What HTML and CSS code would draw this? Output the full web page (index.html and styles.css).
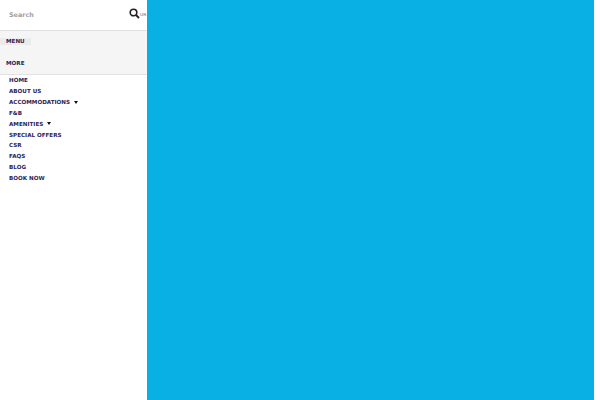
FILE: index.html
```html
<!DOCTYPE html>
<html lang="en">
<head>
<meta charset="utf-8">
<title>Menu</title>
<link rel="stylesheet" href="styles.css">
</head>
<body>
<div class="page">
  <aside class="sidebar">
    <div class="search">
      <span class="search-label">Search</span>
      <svg class="search-icon" width="11" height="11" viewBox="0 0 11 11" aria-hidden="true"><circle cx="4.5" cy="4.5" r="3.3" fill="none" stroke="#222" stroke-width="1.6"/><path d="M7 7l3 3" stroke="#222" stroke-width="1.8"/></svg>
      <span class="search-clip">UR</span>
    </div>
    <div class="tabs">
      <div class="tab-row"><span class="tab tab-active">MENU</span></div>
      <div class="tab-row"><span class="tab">MORE</span></div>
    </div>
    <ul class="nav">
      <li>HOME</li>
      <li>ABOUT US</li>
      <li>ACCOMMODATIONS<span class="caret"></span></li>
      <li>F&amp;B</li>
      <li>AMENITIES<span class="caret"></span></li>
      <li>SPECIAL OFFERS</li>
      <li>CSR</li>
      <li>FAQS</li>
      <li>BLOG</li>
      <li>BOOK NOW</li>
    </ul>
  </aside>
  <main class="hero"></main>
</div>
</body>
</html>
```
FILE: styles.css
```css
* { box-sizing: border-box; }
html, body { margin: 0; height: 100%; background: #fff; overflow: hidden; }
body { font-family: "DejaVu Sans", sans-serif; text-rendering: geometricPrecision; }
.page { display: flex; width: 594px; height: 400px; }
.sidebar { width: 147px; flex: none; background: #fff; }
.hero { flex: 1; background: #08b0e4; }
.search { display: flex; align-items: center; height: 31px; padding-left: 9px; border-bottom: 1px solid #e2e2e2; }
.search-label { flex: 1; font-size: 6.4px; font-weight: 700; color: #a0a0a0; }
.search-icon { flex: none; margin-top: -3px; }
.search-clip { flex: none; width: 7px; overflow: hidden; font-size: 4.5px; color: #666; white-space: nowrap; }
.tabs { display: flex; flex-direction: column; height: 44px; background: #f5f5f5; border-bottom: 1px solid #e2e2e2; padding-top: 7px; }
.tab-row { display: flex; flex: none; height: 21.5px; }
.tab { height: 7px; padding: 0 6px; font-size: 5.6px; line-height: 9px; font-weight: 700; color: #2a2558; }
.tab-active { width: 31px; background: #ebebeb; }
.nav { list-style: none; margin: 0; padding: 1px 0 0 9px; }
.nav li { display: flex; align-items: center; height: 10.85px; font-size: 5.6px; font-weight: 700; color: #2a2558; }
.caret { width: 0; height: 0; margin: -2px 0 0 4px; border-left: 2.7px solid transparent; border-right: 2.7px solid transparent; border-top: 3.2px solid #111; }
```
